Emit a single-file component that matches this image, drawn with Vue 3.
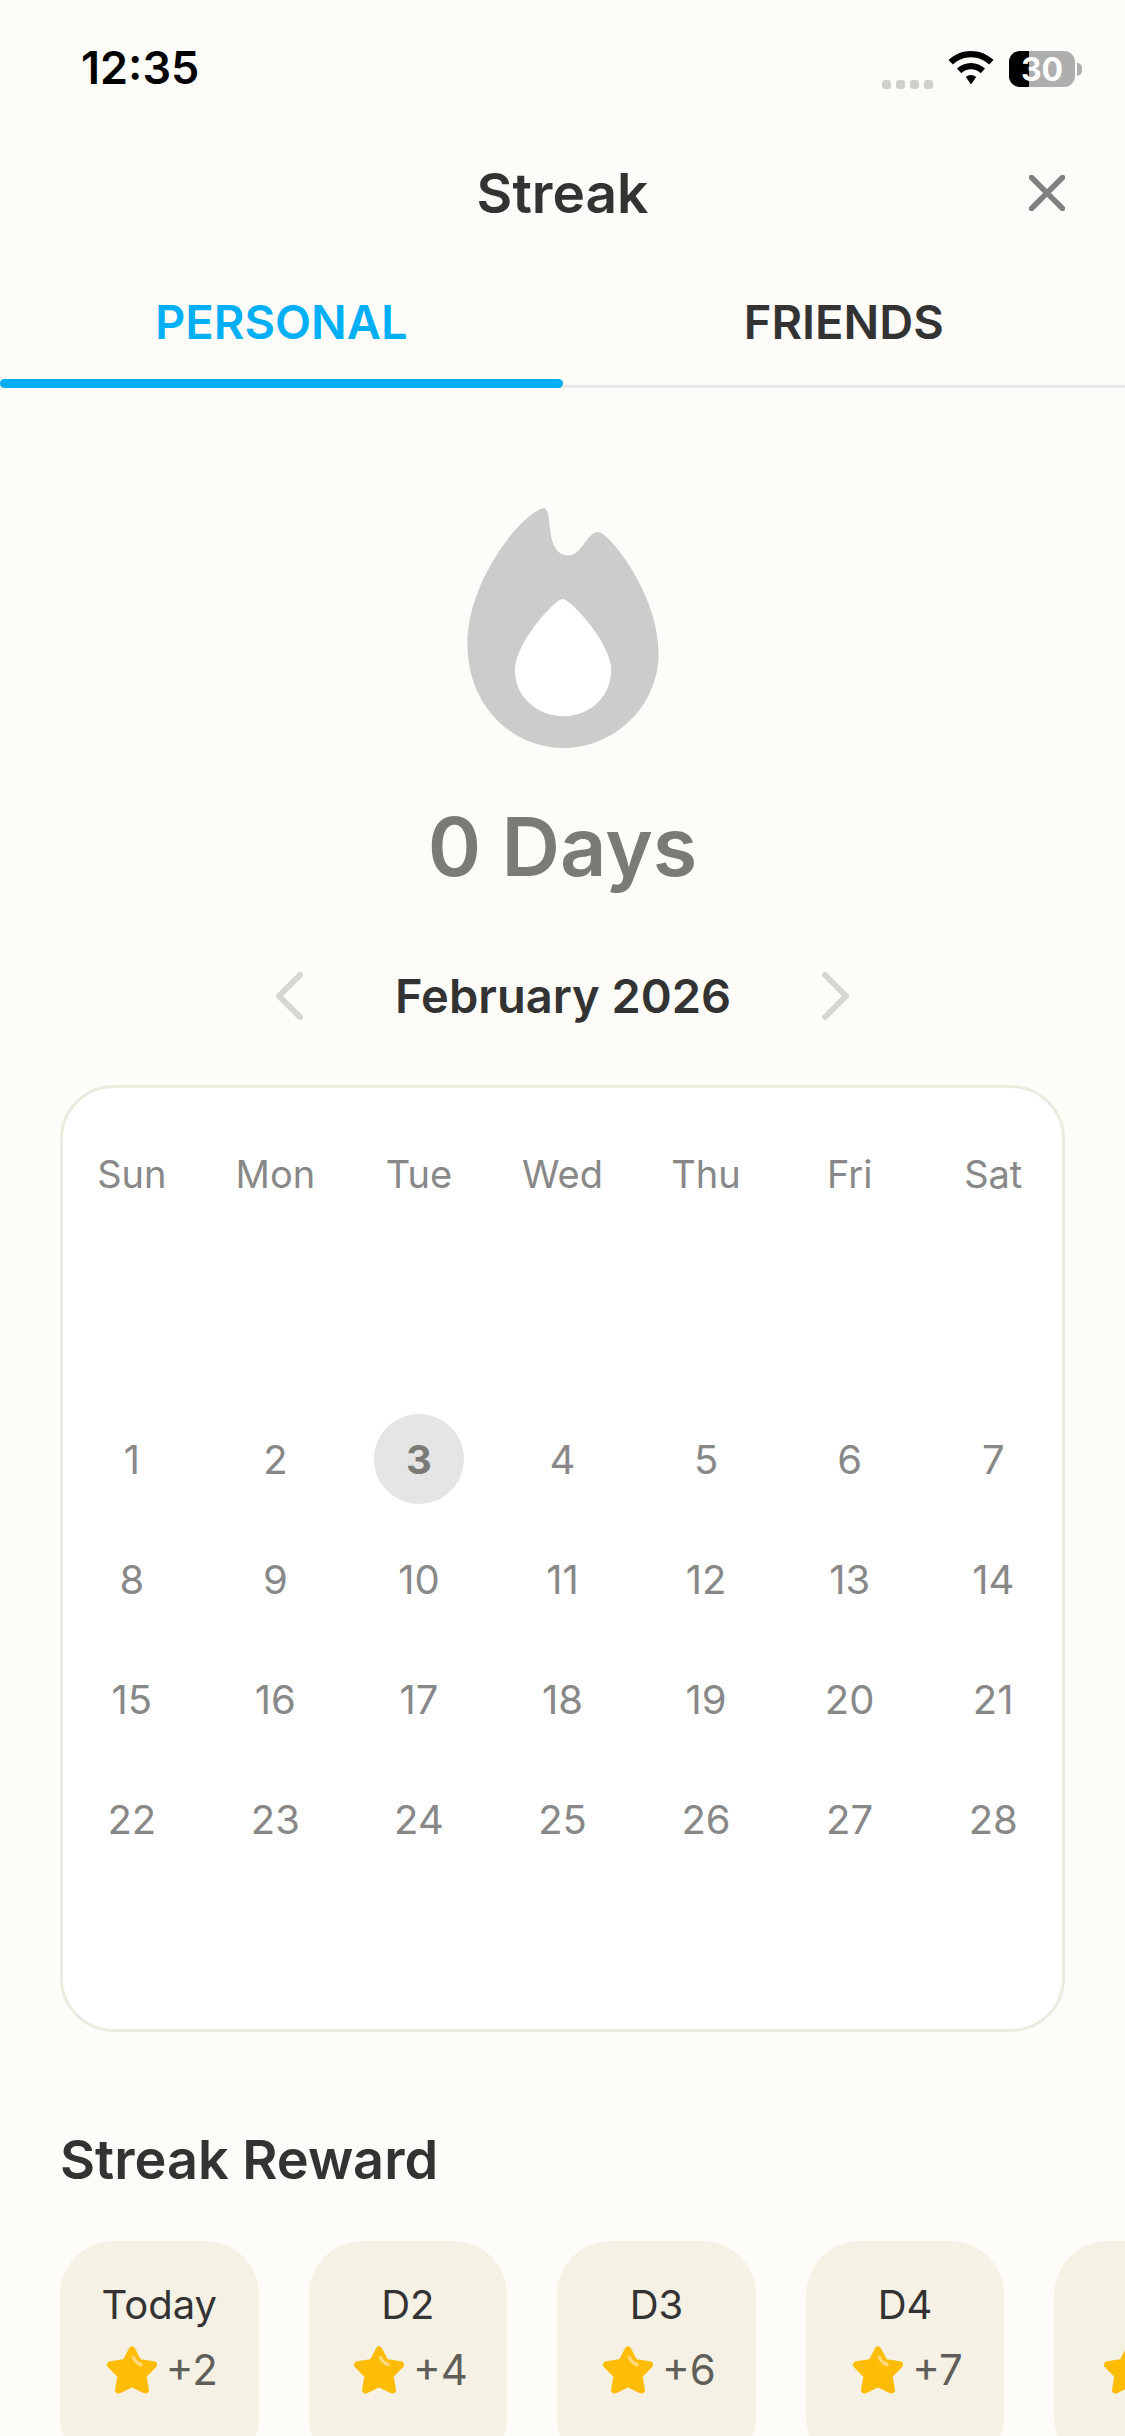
<template>
  <div class="page">
    <!-- STATUS BAR -->
    <div class="status">
      <span class="status__time">12:35</span>
      <div class="status__right">
        <div class="signal">
          <i v-for="n in 4" :key="n"></i>
        </div>
        <svg class="wifi" viewBox="0 0 46 34" aria-hidden="true">
          <path d="M23 0C14.500 0 6.600 3.300 0.500 9L4.800 13.600C9.700 9 16.100 6.300 23 6.300C29.900 6.300 36.300 9 41.200 13.600L45.500 9C39.400 3.300 31.500 0 23 0Z" />
          <path d="M23 12C17.600 12 12.700 14.100 9 17.600L13.300 22.200C15.900 19.800 19.300 18.300 23 18.300C26.700 18.300 30.100 19.800 32.700 22.200L37 17.600C33.300 14.100 28.400 12 23 12Z" />
          <path d="M23 24C21 24 19.200 24.700 17.800 26L23 33.500L28.200 26C26.800 24.700 25 24 23 24Z" />
        </svg>
        <div class="battery">
          <div class="battery__body">
            <div class="battery__fill"></div>
            <span class="battery__text">30</span>
          </div>
          <div class="battery__nub"></div>
        </div>
      </div>
    </div>

    <!-- HEADER -->
    <header class="header">
      <h1 class="header__title">Streak</h1>
      <svg class="header__close" viewBox="0 0 36 36" aria-hidden="true">
        <path d="M2.500 2.500L33.500 33.500M33.500 2.500L2.500 33.500" />
      </svg>
    </header>

    <!-- TABS -->
    <nav class="tabs">
      <div class="tab tab--active">PERSONAL</div>
      <div class="tab">FRIENDS</div>
      <div class="tabs__bar"></div>
    </nav>

    <!-- STREAK -->
    <section class="streak">
      <svg class="streak__flame" viewBox="203 85 572 718" aria-hidden="true">
        <path
          fill="#cccccc"
          d="M432 85C445 90 446 110 450 145C454 190 468 227 505 227C545 227 560 157 595 157C625 157 775 340 775 520C775 680 640 803 490 803C340 803 203 680 203 490C203 300 370 95 432 85Z"
        />
        <path
          fill="#ffffff"
          d="M488 357C512 357 633 490 633 570C633 650 570 708 490 708C410 708 345 650 345 570C345 490 464 357 488 357Z"
        />
      </svg>
      <div class="streak__days">0 Days</div>
    </section>

    <!-- MONTH -->
    <div class="month">
      <svg class="month__arrow" viewBox="0 0 27 48" aria-hidden="true">
        <path d="M24 3L3 24L24 45" />
      </svg>
      <span class="month__label">February 2026</span>
      <svg class="month__arrow" viewBox="0 0 27 48" aria-hidden="true">
        <path d="M3 3L24 24L3 45" />
      </svg>
    </div>

    <!-- CALENDAR -->
    <div class="calendar">
      <div class="calendar__weekdays">
        <div v-for="w in weekdays" :key="w" class="calendar__weekday">{{ w }}</div>
      </div>
      <div class="calendar__grid">
        <div
          v-for="(d, i) in days"
          :key="i"
          class="calendar__day"
          :class="{ 'calendar__day--today': d === 3 }"
        >
          <span v-if="d">{{ d }}</span>
        </div>
      </div>
    </div>

    <!-- REWARD -->
    <h2 class="reward-title">Streak Reward</h2>
    <div class="rewards">
      <div v-for="(r, i) in rewards" :key="i" class="reward">
        <div class="reward__label">{{ r.label }}</div>
        <div class="reward__value">
          <svg class="reward__star" viewBox="0 0 52 50" aria-hidden="true">
            <path
              class="reward__star-shape"
              d="M26 5L32.500 17.500L47.500 19.800L37 30.500L39.500 45L26 38.500L12.500 45L15 30.500L4.500 19.800L19.500 17.500Z"
            />
            <path class="reward__star-shine" d="M27.500 12.500C29 16.500 31.500 18.500 35 19.500" />
          </svg>
          <span class="reward__amount">{{ r.value }}</span>
        </div>
      </div>
    </div>
  </div>
</template>

<script setup>
const weekdays = ["Sun", "Mon", "Tue", "Wed", "Thu", "Fri", "Sat"]

const days = Array.from({ length: 28 }, (_, i) => i + 1)

// the fifth card runs off the screen, only its star shows
const rewards = [
  { label: "Today", value: "+2" },
  { label: "D2", value: "+4" },
  { label: "D3", value: "+6" },
  { label: "D4", value: "+7" },
  { label: "", value: "" },
]
</script>

<style>
html,
body {
  margin: 0;
  background: #fdfcf8;
}
</style>

<style scoped>
.page {
  width: 1125px;
  height: 2436px;
  overflow: hidden;
  background: #fdfcf8;
  font-family: "Inter", "Noto Sans", sans-serif;
  color: #333333;
}

/* STATUS BAR */

.status {
  height: 138px;
  box-sizing: border-box;
  padding: 44px 43px 0 81px;
  display: flex;
  justify-content: space-between;
  align-items: flex-start;
}

.status__time {
  font-size: 45px;
  line-height: 48px;
  font-weight: 600;
  color: #000000;
}

.status__right {
  display: flex;
  align-items: flex-start;
  padding-top: 7px;
}

.signal {
  display: flex;
  gap: 5px;
  margin-top: 29px;
  margin-right: 15px;
}

.signal i {
  width: 9px;
  height: 9px;
  border-radius: 3px;
  background: #cfcfcc;
}

.wifi {
  width: 46px;
  height: 34px;
  margin-right: 15px;
  fill: #000000;
}

.battery {
  display: flex;
  align-items: center;
}

.battery__body {
  position: relative;
  width: 66px;
  height: 36px;
  border-radius: 11px;
  overflow: hidden;
  background: #aeaeae;
  display: flex;
  align-items: center;
  justify-content: center;
}

.battery__fill {
  position: absolute;
  left: 0;
  top: 0;
  bottom: 0;
  width: 20px;
  background: #000000;
}

.battery__text {
  position: relative;
  font-size: 32px;
  font-weight: 700;
  color: #ffffff;
}

.battery__nub {
  width: 5px;
  height: 13px;
  margin-left: 2px;
  border-radius: 0 5px 5px 0;
  background: #aeaeae;
}

/* HEADER */

.header {
  position: relative;
  height: 110px;
  display: flex;
  align-items: center;
  justify-content: center;
}

.header__title {
  margin: 0;
  font-size: 55px;
  line-height: 1;
  font-weight: 600;
}

.header__close {
  position: absolute;
  left: 1029px;
  top: 37px;
  width: 36px;
  height: 36px;
  fill: none;
  stroke: #808080;
  stroke-width: 5.500;
  stroke-linecap: round;
}

/* TABS */

.tabs {
  position: relative;
  height: 140px;
  box-sizing: border-box;
  display: grid;
  grid-template-columns: 1fr 1fr;
  border-bottom: 3px solid #e9e9e7;
}

.tab {
  padding-top: 49px;
  text-align: center;
  font-size: 47px;
  line-height: 50px;
  font-weight: 600;
  color: #333333;
}

.tab--active {
  color: #00aff5;
}

.tabs__bar {
  position: absolute;
  left: 0;
  bottom: -3px;
  width: 563px;
  height: 9px;
  border-radius: 5px;
  background: #00aff5;
}

/* STREAK */

.streak {
  padding-top: 120px;
  display: flex;
  flex-direction: column;
  align-items: center;
}

.streak__flame {
  display: block;
  width: 192px;
  height: 240px;
}

.streak__days {
  margin-top: 51px;
  font-size: 81px;
  line-height: 96px;
  font-weight: 600;
  color: #7b7b76;
}

/* MONTH */

.month {
  margin-top: 77px;
  height: 48px;
  display: flex;
  align-items: center;
  justify-content: center;
  gap: 92px;
}

.month__label {
  width: 335px;
  text-align: center;
  white-space: nowrap;
  font-size: 47px;
  line-height: 48px;
  font-weight: 600;
}

.month__arrow {
  width: 27px;
  height: 48px;
  fill: none;
  stroke: #d6d6d2;
  stroke-width: 6;
  stroke-linecap: round;
  stroke-linejoin: round;
}

/* CALENDAR */

.calendar {
  margin: 65px 60px 0;
  height: 947px;
  box-sizing: border-box;
  border: 3px solid #ecebe0;
  border-radius: 54px;
  background: #ffffff;
}

.calendar__weekdays,
.calendar__grid {
  margin: 0 -3px;
  display: grid;
  grid-template-columns: repeat(7, 1fr);
}

.calendar__weekdays {
  padding-top: 26px;
  grid-auto-rows: 120px;
}

.calendar__grid {
  padding-top: 165px;
  grid-auto-rows: 120px;
}

.calendar__weekday {
  display: flex;
  align-items: center;
  justify-content: center;
  font-size: 38px;
  color: #888888;
}

.calendar__day {
  display: flex;
  align-items: center;
  justify-content: center;
  font-size: 40px;
  color: #888888;
}

.calendar__day--today span {
  width: 90px;
  height: 90px;
  border-radius: 50%;
  display: flex;
  align-items: center;
  justify-content: center;
  background: #e5e5e5;
  font-weight: 700;
  color: #7b7b76;
}

/* REWARD */

.reward-title {
  margin: 98px 0 0 60px;
  font-size: 54px;
  line-height: 60px;
  font-weight: 600;
}

.rewards {
  margin-top: 51px;
  padding-left: 60px;
  display: flex;
  gap: 50px;
}

.reward {
  flex: 0 0 198.600px;
  height: 230px;
  box-sizing: border-box;
  padding-top: 40px;
  border-radius: 54px;
  background: #f6f1e5;
  display: flex;
  flex-direction: column;
  align-items: center;
}

.reward__label {
  min-height: 48px;
  font-size: 40px;
  line-height: 48px;
  color: #333333;
}

.reward__value {
  margin-top: 16px;
  padding-left: 5px;
  display: flex;
  align-items: center;
  gap: 8px;
  font-size: 42px;
  line-height: 50px;
  color: #5f5f5a;
}

.reward__amount {
  min-width: 47px;
}

.reward__star {
  width: 52px;
  height: 50px;
}

.reward__star-shape {
  fill: #ffbc05;
  stroke: #ffbc05;
  stroke-width: 7;
  stroke-linejoin: round;
}

.reward__star-shine {
  fill: none;
  stroke: #ffd97a;
  stroke-width: 3.500;
  stroke-linecap: round;
}
</style>
